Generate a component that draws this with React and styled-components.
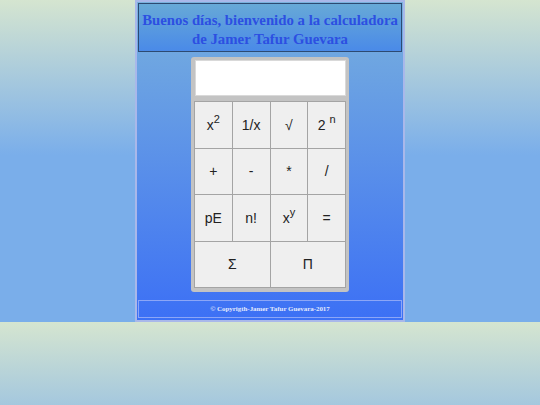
import React from 'react';
import styled, { createGlobalStyle } from 'styled-components';

const GlobalStyle = createGlobalStyle`
  html {
    background: linear-gradient(to bottom, #d5e5d0 0px, #7aaeea 155px, #7aaeea 322px);
    background-size: 100% 322px;
  }
  body {
    margin: 0;
    font-family: "Liberation Serif", "Times New Roman", serif;
  }
`;

const Container = styled.div`
  width: 270px;
  height: 322px;
  box-sizing: border-box;
  margin: 0 auto;
  border: 2px solid #a9b8ea;
  padding: 1px;
  background: linear-gradient(to bottom, #79b1dd, #3c70f5);
  display: flex;
  flex-direction: column;
  align-items: center;
`;

const Header = styled.header`
  align-self: stretch;
  border: 1px solid #2d4a72;
  background: linear-gradient(to bottom, #67a9d7, #4a8ae8);
  padding: 7px 0 2px;
`;

const Title = styled.h1`
  margin: 0;
  text-align: center;
  white-space: nowrap;
  font-size: 14.8px;
  line-height: 19px;
  font-weight: bold;
  color: #2c4fe2;
`;

const Calculator = styled.div`
  margin-top: 5px;
  width: 158px;
  box-sizing: border-box;
  padding: 3px 3px 4px;
  background: #c3c3c3;
  border-radius: 3px;
`;

const Display = styled.div`
  height: 36px;
  margin: 0 0 5px 1px;
  box-sizing: border-box;
  background: #fff;
  border: 1px solid #d9d9d9;
`;

const Keys = styled.div`
  display: grid;
  grid-template-columns: repeat(4, 1fr);
  grid-auto-rows: 45.5px;
  gap: 1px;
  padding: 1px;
  background: #a4a4a4;
`;

const Key = styled.button`
  grid-column: span ${({ span }) => span || 1};
  border: none;
  margin: 0;
  padding: 0;
  background: #efefef;
  color: #222;
  font-family: "Liberation Sans", Arial, sans-serif;
  font-size: 14px;
  display: flex;
  align-items: center;
  justify-content: center;
`;

const Label = styled.span`
  white-space: pre;

  sup {
    font-size: 11px;
    line-height: 0;
    position: relative;
    top: -1px;
  }
`;

const Footer = styled.footer`
  margin-top: auto;
  margin-bottom: 1px;
  align-self: stretch;
  height: 18px;
  box-sizing: border-box;
  border: 1px solid #8ca6f7;
  color: #e4eafc;
  font-size: 6.9px;
  font-weight: bold;
  text-align: center;
  line-height: 16px;
`;

const keys = [
  { label: <>x<sup>2</sup></> },
  { label: '1/x' },
  { label: '√' },
  { label: <>2 <sup>n</sup></> },
  { label: '+' },
  { label: '-' },
  { label: '*' },
  { label: '/' },
  { label: 'pE' },
  { label: 'n!' },
  { label: <>x<sup>y</sup></> },
  { label: '=' },
  { label: 'Σ', span: 2 },
  { label: 'Π', span: 2 },
];

export default function App() {
  return (
    <>
      <GlobalStyle />
      <Container>
        <Header>
          <Title>
            Buenos días, bienvenido a la calculadora
            <br />
            de Jamer Tafur Guevara
          </Title>
        </Header>
        <Calculator>
          <Display />
          <Keys>
            {keys.map((k, i) => (
              <Key key={i} span={k.span}>
                <Label>{k.label}</Label>
              </Key>
            ))}
          </Keys>
        </Calculator>
        <Footer>© Copyrigth-Jamer Tafur Guevara-2017</Footer>
      </Container>
    </>
  );
}
